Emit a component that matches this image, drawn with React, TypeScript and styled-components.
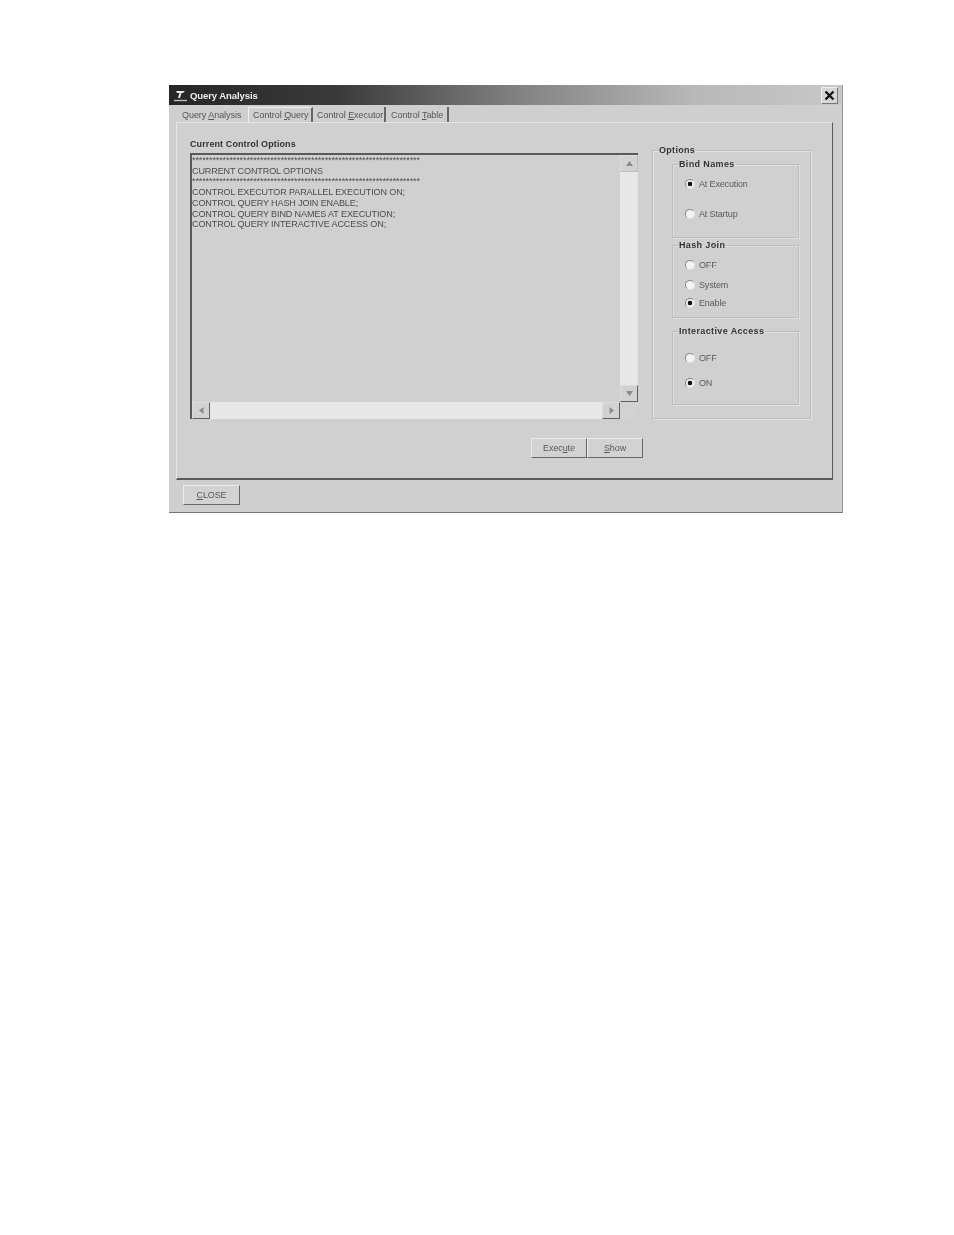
import React from "react";
import styled, { createGlobalStyle } from "styled-components";

const Global = createGlobalStyle`
  html, body { margin: 0; padding: 0; background: #fff; }
  body { font-family: "Liberation Sans", Arial, sans-serif; }
`;

const Page = styled.div`
  width: 954px;
  height: 1235px;
  padding: 85px 0 0 169px;
  box-sizing: border-box;
`;

const Window = styled.div`
  width: 674px;
  height: 428px;
  box-sizing: border-box;
  background: #cfcfcf;
  border-bottom: 1px solid #777;
  border-right: 1px solid #999;
  display: flex;
  flex-direction: column;
  filter: blur(0.6px);
  color: #3a3a3a;
`;

const TitleBar = styled.div`
  height: 20px;
  flex: none;
  display: flex;
  align-items: center;
  padding: 0 4px 0 4px;
  background: linear-gradient(90deg, #262626 0%, #3a3a3a 25%, #828282 52%, #b8b8b8 78%, #c8c8c8 100%);
`;

const TitleText = styled.span`
  margin-left: 1px;
  color: #eee;
  font-size: 9.5px;
  font-weight: 700;
  letter-spacing: -0.08px;
  flex: 1;
`;

const CloseBox = styled.div`
  width: 17px;
  height: 17px;
  background: #d6d6d6;
  border: 1px solid;
  border-color: #eee #777 #777 #eee;
  box-sizing: border-box;
  display: flex;
  align-items: center;
  justify-content: center;
`;

const TabRow = styled.div`
  height: 17px;
  flex: none;
  display: flex;
  align-items: flex-end;
  padding-left: 9px;
`;

const Tab = styled.div<{ $active?: boolean; $sep?: boolean; $w: number; $pad: number }>`
  width: ${(p) => p.$w}px;
  height: 15px;
  padding-left: ${(p) => p.$pad}px;
  box-sizing: border-box;
  font-size: 9px;
  line-height: ${(p) => (p.$active ? 15 : 17)}px;
  letter-spacing: -0.05px;
  white-space: nowrap;
  color: #555;
  border-right: ${(p) => (p.$sep ? "2px solid #666" : "0")};
  border-left: ${(p) => (p.$active ? "1px solid #eee" : "0")};
  border-top: ${(p) => (p.$active ? "1px solid #eee" : "0")};
`;

const Panel = styled.div`
  width: 657px;
  height: 358px;
  flex: none;
  margin-left: 7px;
  box-sizing: border-box;
  background: #d0d0d0;
  border: 1px solid;
  border-color: #e6e6e6 #5c5c5c #5c5c5c #e6e6e6;
  border-bottom-width: 2px;
  padding: 16px 0 0 13px;
`;

const MainRow = styled.div`
  display: flex;
  gap: 14px;
  height: 280px;
`;

const LeftCol = styled.div`
  width: 448px;
  display: flex;
  flex-direction: column;
`;

const SectionLabel = styled.div`
  font-size: 9px;
  font-weight: 700;
  letter-spacing: 0.1px;
  line-height: 11px;
  height: 14px;
  color: #333;
`;

const TextBox = styled.div`
  flex: 1;
  display: grid;
  grid-template-columns: 1fr 18px;
  grid-template-rows: 1fr 17px;
  border-top: 2px solid #5a5a5a;
  border-left: 2px solid #5a5a5a;
  min-height: 0;
`;

const Listing = styled.pre`
  margin: 0;
  padding: 0;
  font-family: "Liberation Sans", Arial, sans-serif;
  font-size: 9.05px;
  line-height: 10.7px;
  letter-spacing: -0.12px;
  color: #4c4c4c;
  overflow: hidden;
`;

const VTrack = styled.div`
  display: flex;
  flex-direction: column;
  justify-content: space-between;
  background: #e8e8e8;
`;

const HTrack = styled.div`
  display: flex;
  justify-content: space-between;
  background: #e8e8e8;
`;

const Corner = styled.div`
  background: #d2d2d2;
`;

const ScrollBtn = styled.div<{ $soft?: boolean }>`
  width: 18px;
  height: 17px;
  box-sizing: border-box;
  background: #d2d2d2;
  border: 1px solid;
  border-color: ${(p) =>
    p.$soft ? "#dcdcdc #bdbdbd #bdbdbd #dcdcdc" : "#dcdcdc #5f5f5f #5f5f5f #dcdcdc"};
  display: flex;
  align-items: center;
  justify-content: center;
  flex: none;
`;

const Arrow = styled.svg`
  width: 7px;
  height: 7px;
  fill: #8a8a8a;
`;

const OuterGroup = styled.fieldset`
  width: 159px;
  height: 274px;
  margin: 6px 0 0 0;
  padding: 3px 0 0 19px;
  box-sizing: border-box;
  border: 1px solid #bdbdbd;
  box-shadow: inset 1px 1px 0 #e2e2e2, 1px 1px 0 #e2e2e2;
  display: flex;
  flex-direction: column;
`;

const OuterLegend = styled.legend`
  margin-left: -14px;
  padding: 0 1px;
  font-size: 9px;
  font-weight: 700;
  letter-spacing: 0.3px;
  line-height: 11px;
  color: #333;
`;

const Group = styled.fieldset<{ $h: number; $mt: number }>`
  width: 127px;
  height: ${(p) => p.$h}px;
  margin: ${(p) => p.$mt}px 0 0 0;
  padding: 0 0 0 12px;
  box-sizing: border-box;
  border: 1px solid #bdbdbd;
  box-shadow: inset 1px 1px 0 #e0e0e0, 1px 1px 0 #e0e0e0;
`;

const GroupLegend = styled.legend`
  margin-left: -7px;
  padding: 0 1px;
  font-size: 9px;
  font-weight: 700;
  letter-spacing: 0.37px;
  line-height: 11px;
  color: #333;
`;

const RadioRow = styled.div<{ $mt: number }>`
  display: flex;
  align-items: center;
  height: 12px;
  margin-top: ${(p) => p.$mt}px;
  font-size: 9px;
  letter-spacing: -0.15px;
  color: #5a5a5a;
`;

const RadioDot = styled.span<{ $on?: boolean }>`
  width: 10px;
  height: 10px;
  flex: none;
  margin-right: 4px;
  box-sizing: border-box;
  border-radius: 50%;
  background: ${(p) => (p.$on ? "radial-gradient(circle, #111 0 2px, #eee 2.6px)" : "#f4f4f4")};
  border: 1px solid;
  border-color: #888 #e4e4e4 #e4e4e4 #888;
`;

const ButtonRow = styled.div`
  display: flex;
  margin: 19px 0 0 341px;
`;

const PushButton = styled.div<{ $w: number }>`
  width: ${(p) => p.$w}px;
  height: 20px;
  box-sizing: border-box;
  display: flex;
  align-items: center;
  justify-content: center;
  font-size: 9px;
  letter-spacing: -0.1px;
  color: #5a5a5a;
  background: #d2d2d2;
  border: 1px solid;
  border-color: #ececec #666 #666 #ececec;
`;

const Footer = styled.div`
  padding: 5px 0 0 14px;
`;

const Mn = styled.span`
  text-decoration: underline;
`;

const ArrowIcon = ({ dir }: { dir: "up" | "down" | "left" | "right" }) => {
  const pts = {
    up: "3.5,1 7,6 0,6",
    down: "0,1 7,1 3.5,6",
    left: "5.5,0 5.5,7 1,3.5",
    right: "1.5,0 6,3.5 1.5,7",
  }[dir];
  return (
    <Arrow viewBox="0 0 7 7">
      <polygon points={pts} />
    </Arrow>
  );
};

const stars = "*".repeat(67);
const listing = [
  stars,
  "CURRENT CONTROL OPTIONS",
  stars,
  "CONTROL EXECUTOR PARALLEL EXECUTION ON;",
  "CONTROL QUERY HASH JOIN ENABLE;",
  "CONTROL QUERY BIND NAMES AT EXECUTION;",
  "CONTROL QUERY INTERACTIVE ACCESS ON;",
].join("\n");

export default function App() {
  return (
    <Page>
      <Global />
      <Window>
        <TitleBar>
          <svg width="16" height="15" viewBox="0 0 16 15">
            <path d="M3 3h9l-2 2H8.5L7 10H5l1.5-5H4z" fill="#e6e6e6" />
            <path d="M1 12.5h13" stroke="#bbb" strokeWidth="1.4" />
          </svg>
          <TitleText>Query Analysis</TitleText>
          <CloseBox>
            <svg width="11" height="11" viewBox="0 0 11 11">
              <path d="M1.5 1.5l8 8M9.5 1.5l-8 8" stroke="#111" strokeWidth="2.3" />
            </svg>
          </CloseBox>
        </TitleBar>
        <TabRow>
          <Tab $w={70} $pad={4}>Query <Mn>A</Mn>nalysis</Tab>
          <Tab $w={65} $pad={4} $active $sep>Control <Mn>Q</Mn>uery</Tab>
          <Tab $w={73} $pad={4} $sep>Control <Mn>E</Mn>xecutor</Tab>
          <Tab $w={63} $pad={5} $sep>Control <Mn>T</Mn>able</Tab>
        </TabRow>
        <Panel>
          <MainRow>
            <LeftCol>
              <SectionLabel>Current Control Options</SectionLabel>
              <TextBox>
                <Listing>{listing}</Listing>
                <VTrack>
                  <ScrollBtn $soft><ArrowIcon dir="up" /></ScrollBtn>
                  <ScrollBtn><ArrowIcon dir="down" /></ScrollBtn>
                </VTrack>
                <HTrack>
                  <ScrollBtn><ArrowIcon dir="left" /></ScrollBtn>
                  <ScrollBtn><ArrowIcon dir="right" /></ScrollBtn>
                </HTrack>
                <Corner />
              </TextBox>
            </LeftCol>
            <OuterGroup>
              <OuterLegend>Options</OuterLegend>
              <Group $h={79} $mt={0}>
                <GroupLegend>Bind Names</GroupLegend>
                <RadioRow $mt={8}><RadioDot $on />At Execution</RadioRow>
                <RadioRow $mt={18}><RadioDot />At Startup</RadioRow>
              </Group>
              <Group $h={78} $mt={2}>
                <GroupLegend>Hash Join</GroupLegend>
                <RadioRow $mt={8}><RadioDot />OFF</RadioRow>
                <RadioRow $mt={8}><RadioDot />System</RadioRow>
                <RadioRow $mt={6}><RadioDot $on />Enable</RadioRow>
              </Group>
              <Group $h={79} $mt={8}>
                <GroupLegend>Interactive Access</GroupLegend>
                <RadioRow $mt={15}><RadioDot />OFF</RadioRow>
                <RadioRow $mt={13}><RadioDot $on />ON</RadioRow>
              </Group>
            </OuterGroup>
          </MainRow>
          <ButtonRow>
            <PushButton $w={56}>Exec<Mn>u</Mn>te</PushButton>
            <PushButton $w={56}><Mn>S</Mn>how</PushButton>
          </ButtonRow>
        </Panel>
        <Footer>
          <PushButton $w={57}><Mn>C</Mn>LOSE</PushButton>
        </Footer>
      </Window>
    </Page>
  );
}
